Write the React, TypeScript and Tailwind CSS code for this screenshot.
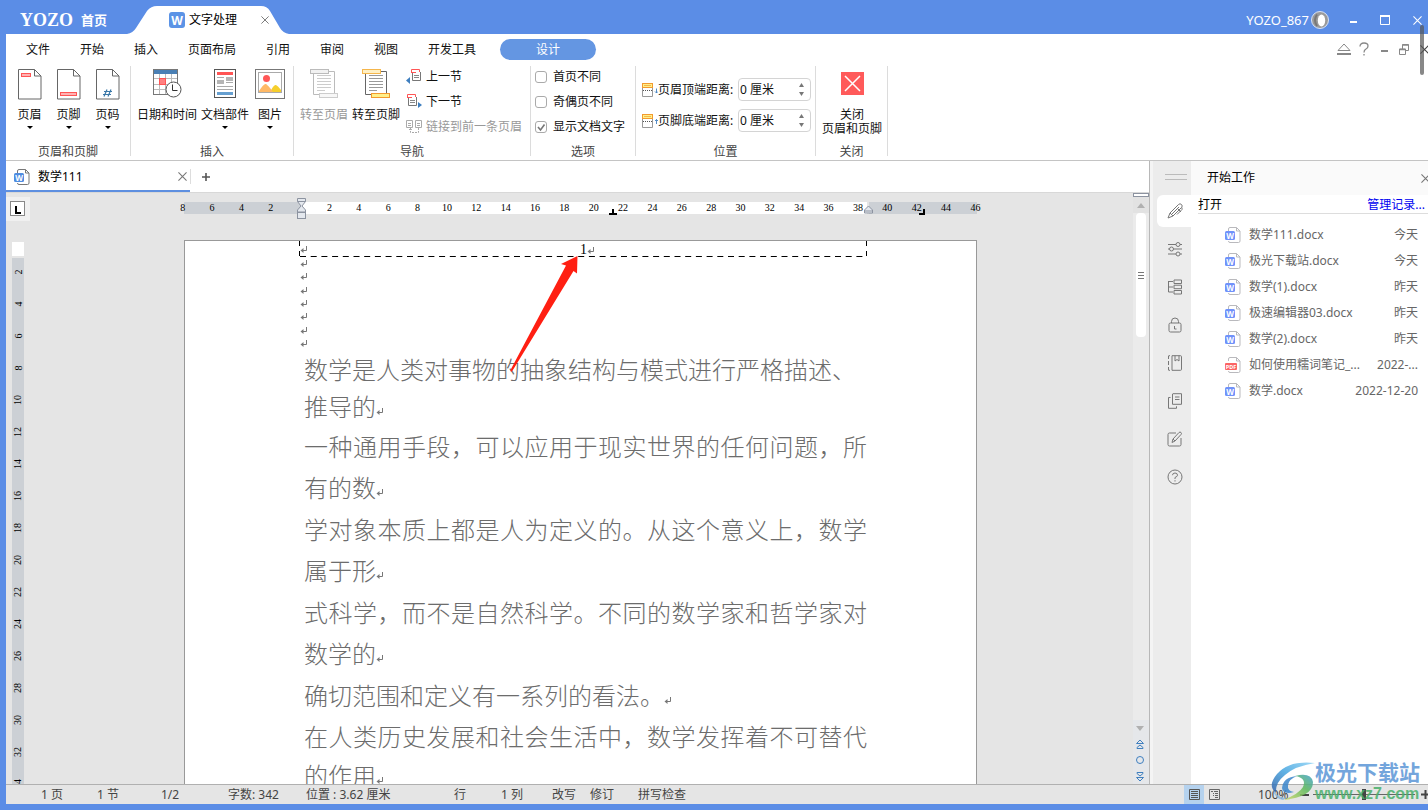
import React, { useState } from 'react';

const menuItems = ['文件', '开始', '插入', '页面布局', '引用', '审阅', '视图', '开发工具'];

const recentFiles = [
  { name: '数学111.docx', date: '今天', type: 'doc' },
  { name: '极光下载站.docx', date: '今天', type: 'doc' },
  { name: '数学(1).docx', date: '昨天', type: 'doc' },
  { name: '极速编辑器03.docx', date: '昨天', type: 'doc' },
  { name: '数学(2).docx', date: '昨天', type: 'doc' },
  { name: '如何使用糯词笔记_...', date: '2022-...', type: 'pdf' },
  { name: '数学.docx', date: '2022-12-20', type: 'doc' }
];

const paragraphs = [
  { full: '数学是人类对事物的抽象结构与模式进行严格描述、', rest: '推导的', leading: 'leading-[37px]', justify: false },
  { full: '一种通用手段，可以应用于现实世界的任何问题，所', rest: '有的数', leading: 'leading-[41px]', justify: true },
  { full: '学对象本质上都是人为定义的。从这个意义上，数学', rest: '属于形', leading: 'leading-[41px]', justify: true },
  { full: '式科学，而不是自然科学。不同的数学家和哲学家对', rest: '数学的', leading: 'leading-[41px]', justify: true },
  { full: '', rest: '确切范围和定义有一系列的看法。', leading: 'leading-[41px]', justify: false },
  { full: '在人类历史发展和社会生活中，数学发挥着不可替代', rest: '的作用', leading: 'leading-[39px]', justify: true }
];

const horizontalMarks = [
  '8', '6', '4', '2', '', '2', '4', '6', '8', '10', '12', '14', '16', '18', '20', '22', '24', '26',
  '28', '30', '32', '34', '36', '38', '40', '42', '44', '46'
];
const verticalMarks = ['2', '4', '6', '8', '10', '12', '14', '16', '18', '20', '22', '24', '26', '28', '30', '32', '34'];

const CloseIcon = ({ size = 10, className = '' }: { size?: number; className?: string }) => (
  <svg width={size} height={size} viewBox="0 0 10 10" fill="none" stroke="currentColor" strokeWidth="1.2" className={className}>
    <path d="M.5.5l9 9M9.5.5l-9 9" />
  </svg>
);

const DownArrow = () => (
  <svg width="6" height="3" viewBox="0 0 6 3">
    <path d="M0 0h6L3 3z" fill="#000" />
  </svg>
);

const ReturnMark = () => (
  <svg width="8" height="7" viewBox="0 0 8 7" fill="none" stroke="#777" className="inline-block shrink-0">
    <path d="M6.500 0v4.500H1.500" />
    <path d="M3.500 2v5L.5 4.500z" fill="#777" stroke="none" />
  </svg>
);

const FileIcon = ({ type, dark }: { type: string; dark?: boolean }) => (
  <svg width="16" height="16" viewBox="0 0 16 16" className="shrink-0">
    <path d="M3.500 4V2q0-1.500 1.500-1.500h6.500l3.500 3.500v10q0 1.500-1.500 1.500H5q-1.500 0-1.500-1.500" fill="#fff" stroke={dark ? '#777' : '#b9b9bd'} />
    <path d="M11.500.5V4H15" fill="none" stroke={dark ? '#777' : '#b9b9bd'} />
    {type === 'pdf' ? (
      <>
        <rect x="0" y="6" width="12" height="7" rx="1" fill="#fb6464" />
        <text x="6" y="11.500" fontSize="5.500" fontWeight="700" textAnchor="middle" fill="#fff">PDF</text>
      </>
    ) : (
      <>
        <rect x="0" y="4" width="10" height="9" rx="1.500" fill={dark ? '#4f8ce0' : '#7092fa'} />
        <text x="5" y="11.500" fontSize="8" fontWeight="700" textAnchor="middle" fill="#fff">W</text>
      </>
    )}
  </svg>
);

const PageIcon = ({ kind }: { kind: 'header' | 'footer' | 'number' }) => (
  <svg width="24" height="31" viewBox="0 0 24 31" fill="none">
    <path d="M.5.5h16l6.500 6.500v23H.5z" fill="#fff" stroke="#666" />
    <path d="M16.500.5V7H23" stroke="#666" />
    {kind === 'header' && <rect x="3.500" y="4.500" width="9" height="3" fill="#ffb3b3" stroke="#f55" />}
    {kind === 'footer' && <rect x="3.500" y="23.500" width="16" height="3" fill="#ffb3b3" stroke="#f55" />}
    {kind === 'number' && <path d="M11 20.500l-3 7M15 20.500l-3 7M8 22.500h8M7 25.500h8" stroke="#3b78a8" strokeWidth="1.200" />}
  </svg>
);

const CalendarIcon = () => (
  <svg width="29" height="29" viewBox="0 0 29 29" fill="none">
    <rect x=".5" y=".5" width="24" height="25" fill="#fff" stroke="#777" />
    <rect x="1" y="1" width="23" height="4" fill="#4a80b5" />
    <path d="M6.500 5v20M12.500 5v20M18.500 5v20M1 9.500h23M1 15.500h23M1 20.500h23" stroke="#bbb" />
    <rect x="6.500" y="9.500" width="6" height="6" fill="#ff8080" stroke="#f55" />
    <circle cx="20.500" cy="20.500" r="7.500" fill="#fff" stroke="#555" />
    <path d="M19.500 15.500v6h5" stroke="#333" />
  </svg>
);

const PartsIcon = () => (
  <svg width="22" height="30" viewBox="0 0 22 30" fill="none">
    <rect x=".5" y=".5" width="21" height="28" fill="#fff" stroke="#555" />
    <rect x="3" y="3" width="16" height="3" fill="#f55" />
    <path d="M3 8.500h7M12 13.500h7M3 17.500h16M3 20.500h16" stroke="#aaa" />
    <rect x="3" y="11" width="7" height="4" fill="#b5b5b5" />
    <rect x="12" y="8" width="7" height="4" fill="#b5b5b5" />
    <rect x="3" y="23" width="16" height="3" fill="#669fd0" />
  </svg>
);

const PictureIcon = () => (
  <svg width="30" height="30" viewBox="0 0 30 30" fill="none">
    <rect x=".5" y=".5" width="29" height="29" fill="#fff" stroke="#777" />
    <rect x="3.500" y="3.500" width="23" height="20" fill="#fff" stroke="#aaa" />
    <circle cx="11.500" cy="9.500" r="3.500" fill="#ff5757" />
    <path d="M15 23q4-8 6-7t5 5v2z" fill="#f6cf2c" />
    <path d="M4 22q5-8 7-7t7 8H4z" fill="#ffb966" />
  </svg>
);

const GotoIcon = ({ footer }: { footer?: boolean }) => (
  <svg width="28" height="30" viewBox="0 0 28 30" fill="none" stroke={footer ? '#666' : '#bbb'}>
    <path d="M3.500 2.500h21v23h-21z" fill="#fff" />
    <path d="M7 6.500h14M7 9.500h14M7 12.500h14M7 15.500h14M7 18.500h14M7 21.500h8" stroke={footer ? '#999' : '#ccc'} />
    <rect x=".5" y=".5" width="18" height="4" fill={footer ? '#fff0c4' : '#f2f2f2'} stroke={footer ? '#f5b64c' : '#bbb'} />
    <rect x="9.500" y="24.500" width="18" height="4" fill={footer ? '#fff08a' : '#f7f7f7'} stroke={footer ? '#f29a2e' : '#ccc'} />
  </svg>
);

const SectionIcon = ({ next }: { next?: boolean }) => (
  <svg width="16" height="15" viewBox="0 0 16 15" fill="none">
    <g transform={next ? 'translate(-4 0)' : undefined}>
      <path d="M6.500 3v8.500h8V3" stroke="#777" fill="#fff" />
      <path d="M8 6.500h5M8 8.500h5" stroke="#888" />
      <path d="M5.500 3V.5h8V3" stroke="#f55" />
      <path d="M5 3.500h5" stroke="#f55" />
    </g>
    {next ? <path d="M12 8v6l4-3z" fill="#3f7fbf" /> : <path d="M4 8v7L0 11.500z" fill="#3f7fbf" />}
  </svg>
);

const LinkIcon = () => (
  <svg width="16" height="15" viewBox="0 0 16 15" fill="none" stroke="#aaa">
    <path d="M.5 1.500h6v7h-6zM9.500 1.500h6v7h-6zM2 4.500h3M2 6.500h3M11 4.500h3M11 6.500h3" />
    <path d="M4.500 9v4.500h8V9M3 11l1.500-1.500L6 11" strokeDasharray="2 1" />
  </svg>
);

const DistanceIcon = ({ up }: { up?: boolean }) => (
  <svg width="16" height="14" viewBox="0 0 16 14" fill="none">
    <path d="M.5 5v8.500h10V5" stroke="#999" />
    <path d="M1 7.500h9" stroke="#555" strokeDasharray="1 1" />
    <rect x=".5" y=".5" width="10" height="4" fill="#fff08a" stroke="#f29a2e" />
    <path d="M2 2.500h7" stroke="#f5b64c" />
    <path d={up ? 'M14.500 10V5.500M13 7l1.500-1.500L16 7' : 'M14.500 5.500V10M13 8.500l1.500 1.500L16 8.500'} stroke="#3f7fbf" strokeWidth=".9" />
  </svg>
);

const sideIcons: { label: string; art: React.ReactNode }[] = [
  { label: '开始工作', art: <path d="M1 15l2-5 8.500-8.500q1.500-1.500 3 0t0 3L6 13zM3 10l3 3M4.500 11.500l7.500-7.500M11 6l3 3M15 4.500v2l-5 5" /> },
  { label: '属性', art: <path d="M1 3.500h8M13 3.500h2M1 8h1.500M6.500 8H15M1 13h8M13 13h2M11 1.500a2 2 0 100 4 2 2 0 000-4zM4.500 6a2 2 0 100 4 2 2 0 000-4zM11 11a2 2 0 100 4 2 2 0 000-4z" /> },
  { label: '结构', art: <path d="M1.500 2v11H6M1.500 2.500H6M1.500 8H6M7 1h7.500v3.500H7zM7 6.200h7.500v3.500H7zM7 11.500h7.500V15H7z" /> },
  { label: '保护', art: <path d="M3.500 6h9q1.500 0 1.500 1.500v6q0 1.500-1.500 1.500h-9Q2 15 2 13.500v-6Q2 6 3.500 6zM4.500 6V4.500q0-3.500 3.500-3.500t3.500 3.500V6M7.500 9v3h2" /> },
  { label: '书签', art: <path d="M5 .7h8.500q1 0 1 1v12.600q0 1-1 1H5zM8 .7V6l2-1.500L12 6V.7M1.500 1v3M1.500 6v4M1.500 12v3M1.500.7H3M1.500 15.300H3" /> },
  { label: '剪贴板', art: <path d="M6 .7h8.500v10.600H5.500V1zM8 4h4.500M8 6.500h4.500M3.500 4.500H1.500v10.800h8v-2" /> },
  { label: '批注', art: <path d="M9 2H2.500Q1 2 1 3.500v10Q1 15 2.500 15h10q1.500 0 1.500-1.500V7M5 11.500l1-3.500 6-6.500q1-1 2 0t0 2L8 10zM6 8l2 2" /> },
  { label: '帮助', art: <path d="M8 1a7 7 0 100 14A7 7 0 008 1zM5.500 6.200Q5.500 4 8 4t2.500 2.200Q10.500 7.500 8 8.500V10M8 11.200v1.300" /> }
];

const Group = ({ label, className, children }: { label: string; className: string; children: React.ReactNode }) => (
  <section className="flex shrink-0">
    <div className="flex flex-col">
      <div className={`flex flex-1 ${className}`}>{children}</div>
      <p className="h-[18px] text-center leading-5 text-[#444]">{label}</p>
    </div>
    <div className="mb-1 mt-0.5 w-px bg-[#dcdcdc]" />
  </section>
);

const BigButton = ({ icon, label, width, arrow, disabled }: { icon: React.ReactNode; label: string; width: string; arrow?: boolean; disabled?: boolean }) => (
  <button disabled={disabled} className={`flex flex-col items-center self-start pt-[5px] disabled:text-[#999] ${width}`}>
    <span className="flex h-[38px] items-start">{icon}</span>
    <span className="mb-[3px] whitespace-nowrap leading-4">{label}</span>
    {arrow && <DownArrow />}
  </button>
);

const DistanceField = ({ id, label, up }: { id: string; label: string; up?: boolean }) => {
  const [value, setValue] = useState(0);

  return (
    <div className="flex h-[23px] items-center">
      <DistanceIcon up={up} />
      <label htmlFor={id} className="w-20 whitespace-nowrap">{label}</label>
      <div className="flex h-full w-[73px] items-center rounded border border-[#d4d4d4]">
        <input
          id={id}
          className="w-[54px] min-w-0 pl-px outline-none"
          value={`${value} 厘米`}
          onChange={(e) => setValue(parseInt(e.target.value) || 0)}
        />
        <div className="flex flex-1 flex-col items-center gap-[5px]">
          <button aria-label="增加" className="flex" onClick={() => setValue(value + 1)}>
            <svg width="5" height="4" viewBox="0 0 5 4"><path d="M0 4h5L2.500 0z" fill="#777" /></svg>
          </button>
          <button aria-label="减少" className="flex" onClick={() => setValue(Math.max(0, value - 1))}>
            <svg width="5" height="4" viewBox="0 0 5 4"><path d="M0 0h5L2.500 4z" fill="#777" /></svg>
          </button>
        </div>
      </div>
    </div>
  );
};

const TitleBar = () => (
  <header className="flex h-[34px] shrink-0 items-center pl-5 text-white">
    <span className="w-[61px] pt-1.5 text-[18px] font-bold leading-5 [font-family:'Liberation_Serif',serif]">YOZO</span>
    <button className="pt-1.5 text-[13px] font-bold">首页</button>
    <div className="relative ml-5 h-full w-[164px]">
      <svg className="absolute inset-0" width="164" height="34" viewBox="0 0 164 34">
        <path d="M0 34q6-1 9-6l11-17q4-5 10-5h104q6 0 9 5l10 17q3 5 9 6z" fill="#fff" />
      </svg>
      <div className="relative flex h-full items-center pl-[42px] pt-1.5 text-black">
        <svg width="16" height="16" viewBox="0 0 16 16" className="mr-1">
          <rect width="16" height="16" rx="3" fill="#5b93e6" />
          <text x="8" y="12.500" fontSize="12" fontWeight="700" textAnchor="middle" fill="#fff">W</text>
        </svg>
        <span>文字处理</span>
        <button aria-label="关闭" className="ml-6 text-[#777]"><CloseIcon size={8} /></button>
      </div>
    </div>
    <div className="ml-auto flex items-center pt-1.5">
      <span className="mr-0.5 text-[13px]">YOZO_867</span>
      <svg width="18" height="18" viewBox="0 0 18 18" className="mr-3">
        <circle cx="9" cy="9" r="8.500" fill="#9a9a9a" stroke="#d6e2f7" />
        <path d="M6 3.500Q2 9 6 15" stroke="#777" strokeWidth="2" fill="none" />
        <ellipse cx="10.500" cy="9.500" rx="3.700" ry="6" fill="#fff" />
      </svg>
      <div className="-mr-px flex gap-2">
        <button aria-label="最小化" className="flex h-6 w-6 items-center justify-center pt-1"><svg width="7" height="2"><rect width="7" height="2" fill="#fff" /></svg></button>
        <button aria-label="最大化" className="flex h-6 w-6 items-center justify-center">
          <svg width="10" height="10" viewBox="0 0 10 10"><path d="M.5 1v8.500h9V1" stroke="#fff" fill="none" /><rect width="10" height="2" fill="#fff" /></svg>
        </button>
        <button aria-label="关闭窗口" className="flex h-6 w-6 items-center justify-center"><CloseIcon size={9} /></button>
      </div>
    </div>
  </header>
);

const MenuBar = () => (
  <nav className="flex h-[30px] items-center gap-[30px] pl-5">
    {menuItems.map((item) => (
      <button key={item} className="whitespace-nowrap pt-0.5">{item}</button>
    ))}
    <button className="-ml-1.5 h-[21px] w-24 rounded-full bg-[#6496e2] pt-px leading-5 text-white">设计</button>
    <div className="-mr-1.5 ml-auto flex text-[#888]">
      <button aria-label="收起功能区" className="flex h-5 w-5 items-center justify-center">
        <svg width="14" height="12" viewBox="0 0 14 12" fill="none" stroke="currentColor"><path d="M1 7.500L7 1l6 6.500z" /><path d="M0 11h14" strokeWidth="2" /></svg>
      </button>
      <button aria-label="帮助" className="flex h-5 w-5 items-center justify-center">
        <svg width="10" height="14" viewBox="0 0 10 14" fill="none" stroke="currentColor" strokeWidth="1.300"><path d="M1 4.500Q1 1 5 1t4 3q0 2-2 3T5 10.500M5 12v1.500" /></svg>
      </button>
      <button aria-label="最小化文档" className="flex h-5 w-5 items-center justify-center pt-1"><svg width="7" height="2"><rect width="7" height="2" fill="#888" /></svg></button>
      <button aria-label="还原文档" className="flex h-5 w-5 items-center justify-center">
        <svg width="10" height="11" viewBox="0 0 10 11" fill="none" stroke="currentColor"><path d="M.5 5h6v5.500h-6zM3.500 5V.5h6v6h-3" /><path d="M.5 5.500h6M3.500 1h6" strokeWidth="1.500" /></svg>
      </button>
      <button aria-label="关闭文档" className="flex h-5 w-5 items-center justify-center text-[#444]"><CloseIcon size={9} /></button>
    </div>
  </nav>
);

const Ribbon = () => {
  const [options, setOptions] = useState([
    { label: '首页不同', checked: false },
    { label: '奇偶页不同', checked: false },
    { label: '显示文档文字', checked: true }
  ]);

  const toggle = (index: number) => {
    setOptions(options.map((o, i) => (i === index ? { ...o, checked: !o.checked } : o)));
  };

  return (
    <div className="flex h-[97px] overflow-hidden border-b border-[#c4c4c4]">
      <Group label="页眉和页脚" className="pl-1 pr-[3px]">
        <BigButton icon={<PageIcon kind="header" />} label="页眉" width="w-[39px]" arrow />
        <BigButton icon={<PageIcon kind="footer" />} label="页脚" width="w-[39px]" arrow />
        <BigButton icon={<PageIcon kind="number" />} label="页码" width="w-[39px]" arrow />
      </Group>

      <Group label="插入" className="gap-1 px-1.5">
        <BigButton icon={<CalendarIcon />} label="日期和时间" width="w-[60px]" />
        <BigButton icon={<PartsIcon />} label="文档部件" width="w-12" arrow />
        <BigButton icon={<PictureIcon />} label="图片" width="w-[34px]" arrow />
      </Group>

      <Group label="导航" className="gap-1 pl-1.5 pr-2">
        <BigButton icon={<GotoIcon />} label="转至页眉" width="w-12" disabled />
        <BigButton icon={<GotoIcon footer />} label="转至页脚" width="w-12" />
        <div className="ml-0.5">
          <button className="flex h-[25px] items-center gap-1"><SectionIcon />上一节</button>
          <button className="flex h-[25px] items-center gap-1"><SectionIcon next />下一节</button>
          <button disabled className="flex h-[25px] items-center gap-1 whitespace-nowrap text-[#999]"><LinkIcon />链接到前一条页眉</button>
        </div>
      </Group>

      <Group label="选项" className="flex-col pl-1 pr-2.5">
        {options.map((option, index) => (
          <label key={option.label} className="flex h-[25px] items-center gap-1.5 whitespace-nowrap">
            <span className="relative flex">
              <input
                type="checkbox"
                checked={option.checked}
                onChange={() => toggle(index)}
                className="h-3 w-3 appearance-none rounded-[3px] border border-[#aaa] bg-white"
              />
              {option.checked && (
                <svg className="pointer-events-none absolute inset-0" width="12" height="12" viewBox="0 0 12 12" fill="none" stroke="#777" strokeWidth="1.600">
                  <path d="M3 6l2.500 3L9.500 3.500" />
                </svg>
              )}
            </span>
            {option.label}
          </label>
        ))}
      </Group>

      <Group label="位置" className="flex-col gap-2 pl-1.5 pr-1 pt-3.5">
        <DistanceField id="header-distance" label="页眉顶端距离:" />
        <DistanceField id="footer-distance" label="页脚底端距离:" up />
      </Group>

      <Group label="关闭" className="pl-1.5 pr-[5px]">
        <button className="flex flex-col items-center self-start pt-2">
          <svg width="23" height="23" viewBox="0 0 23 23" className="mb-[13px]">
            <rect width="23" height="23" fill="#ff5a5a" />
            <path d="M4 4l15 15M19 4L4 19" stroke="#fff" strokeWidth="1.500" />
          </svg>
          <span className="leading-3.5">关闭</span>
          <span className="leading-3.5">页眉和页脚</span>
        </button>
      </Group>
    </div>
  );
};

const HorizontalRuler = () => (
  <div className="relative h-[18px] w-[793px] max-w-none shrink-0 py-[3px]">
    <div className="flex h-3">
      <div className="w-[117px] bg-[#ccd0d5]" />
      <div className="mr-0.5 flex-1 bg-white" />
      <div className="w-[108px] bg-[#ccd0d5]" />
    </div>
    {/* One cell per two units, so the outer labels sit on the page edges */}
    <div className="absolute -left-4 -right-[13px] top-[3px] flex h-3">
      {horizontalMarks.map((mark, i) => (
        <span key={i} className="flex-1 text-center text-[10px] leading-3 text-black [font-family:'Liberation_Serif',serif]">{mark}</span>
      ))}
    </div>
    <svg className="absolute -top-px left-[113px]" width="9" height="22" viewBox="0 0 9 22" fill="#e4e8ee" stroke="#8c93a0">
      <path d="M.5.5h8v3L5 8l3.500 4v2h-8v-2L4 8 .5 3.500z" />
      <path d="M.5 3.500h8" />
      <rect x=".5" y="14.500" width="8" height="6" />
    </svg>
    <svg className="absolute left-[425px] top-2.5" width="8" height="6"><path d="M0 4h8v2H0zM3 0h2v5H3z" /></svg>
    <svg className="absolute left-[680px] top-1.5" width="9" height="9" viewBox="0 0 9 9" fill="#e4e8ee" stroke="#8c93a0">
      <path d="M4.500 1l4 4v3h-8V5zM.5 6h8" />
    </svg>
    <svg className="absolute left-[735px] top-2.5" width="6" height="6"><path d="M0 4h6v2H0zM4 0h2v6H4z" /></svg>
  </div>
);

const DocumentPage = () => (
  <article className="relative min-h-[1100px] w-[793px] shrink-0 border border-[#999] bg-white pl-[119px] pr-[109px]">
    <div className="relative -ml-1 flex h-4 items-center [font-family:'Liberation_Serif',serif]">
      <svg className="absolute inset-0 h-[17px] w-full overflow-visible" stroke="#000" strokeDasharray="6 4.700">
        <line x1="0" y1="15.500" x2="567" y2="15.500" />
        <line x1="-.5" y1="0" x2="-.5" y2="16" strokeDasharray="5 5" />
        <line x1="566.500" y1="0" x2="566.500" y2="16" strokeDasharray="5 5" />
      </svg>
      <ReturnMark />
      <span className="mx-auto flex items-center pt-0.5 text-[14px] leading-4 text-black">1<ReturnMark /></span>
    </div>
    <div className="-ml-1 flex h-[93px] flex-col">
      {Array.from({ length: 7 }).map((_, i) => (
        <span key={i} className="flex flex-1 items-center"><ReturnMark /></span>
      ))}
    </div>
    <div className="flex flex-col gap-px pt-px text-[24px] font-light text-[#6c6c6c]">
      {paragraphs.map((p) => (
        <p key={p.rest} className={p.leading}>
          {p.full && (
            <span className={`block whitespace-nowrap ${p.justify ? '[text-align-last:justify]' : ''}`}>{p.full}</span>
          )}
          <span className="flex items-center">
            {p.rest}
            <span className="flex pt-2.5"><ReturnMark /></span>
          </span>
        </p>
      ))}
    </div>
    <svg className="absolute left-[325px] top-[15px]" width="70" height="120" viewBox="0 0 70 120">
      <path d="M67.500 0L51 8l5 1.500L.5 114q-.5 2 1.500 1.500L63.500 15l3.500 2.500z" fill="#ff1f12" />
    </svg>
  </article>
);

const ScrollBar = () => (
  <div className="flex w-4 shrink-0 flex-col items-center bg-[#ebebeb]">
    <div className="h-1 w-full border border-[#8c93a0] bg-white" />
    <button aria-label="向上滚动" className="flex h-4 w-full items-center justify-center bg-[#e2e2e2]">
      <svg width="8" height="5" viewBox="0 0 8 5"><path d="M0 5h8L4 0z" fill="#b0b0b0" /></svg>
    </button>
    <div className="flex h-[124px] w-2.5 items-center justify-center rounded-sm bg-white">
      <svg width="6" height="7" viewBox="0 0 6 7" stroke="#777"><path d="M0 .5h6M0 3.500h6M0 6.500h6" /></svg>
    </div>
    <div className="mt-auto flex w-full flex-col items-center bg-[#e5e7ea] pr-0.5 text-[#3f7fbf]">
      <button aria-label="向下滚动" className="flex h-4 items-center">
        <svg width="8" height="5" viewBox="0 0 8 5"><path d="M0 0h8L4 5z" fill="#b0b0b0" /></svg>
      </button>
      <button aria-label="上一页" className="flex h-4 items-center">
        <svg width="8" height="11" viewBox="0 0 8 11" fill="none" stroke="currentColor"><path d="M.5 4.500L4 1l3.500 3.500zM1 9.500v-1L4 6l3 2.500v1z" /></svg>
      </button>
      <button aria-label="选择浏览对象" className="flex h-4 items-center">
        <svg width="8" height="8" viewBox="0 0 8 8" fill="none" stroke="currentColor"><circle cx="4" cy="4" r="3.500" /></svg>
      </button>
      <button aria-label="下一页" className="flex h-4 items-center">
        <svg width="8" height="11" viewBox="0 0 8 11" fill="none" stroke="currentColor"><path d="M1 1.500v1L4 5l3-2.500v-1zM.5 6.500L4 10l3.500-3.500z" /></svg>
      </button>
    </div>
  </div>
);

const Editor = () => (
  <main className="flex min-w-0 flex-1 flex-col border-r border-[#b8b8b8]">
    {/* Document tabs */}
    <div className="flex h-8 shrink-0 border-b border-[#d8d8d8] bg-white">
      <div className="flex w-[184px] items-center border-b-2 border-[#5e8fe0] pl-2 pt-0.5 text-black">
        <FileIcon type="doc" dark />
        <span className="ml-2">数学111</span>
        <button aria-label="关闭标签" className="ml-auto pr-[3px] text-[#777]"><CloseIcon size={9} /></button>
      </div>
      <div className="my-2 w-px bg-[#ddd]" />
      <button aria-label="新建标签" className="px-[11px] text-[#555]">
        <svg width="8" height="8" viewBox="0 0 8 8" stroke="currentColor" strokeWidth="1.600"><path d="M4 0v8M0 4h8" /></svg>
      </button>
    </div>

    <div className="flex min-h-0 flex-1 bg-[#e5e5e5]">
      <div className="flex w-6 shrink-0 flex-col overflow-hidden">
        <div className="mt-1 h-6 shrink-0 bg-[#f0f0f0] p-1">
          <svg width="15" height="15" viewBox="0 0 15 15"><rect x=".5" y=".5" width="14" height="14" fill="#fff" stroke="#888" /><path d="M5 5h2v6h4v2H5z" /></svg>
        </div>
        <div className="ml-1.5 mt-[21px] h-3.5 w-3 shrink-0 bg-white" />
        <div className="ml-1.5 mt-0.5 flex w-3 flex-1 flex-col overflow-hidden bg-[#ccd0d5]">
          {verticalMarks.map((mark) => (
            <span key={mark} className="flex h-8 w-3 shrink-0 items-center justify-center pb-1">
              <span className="-rotate-90 text-[10px] leading-3 text-black [font-family:'Liberation_Serif',serif]">{mark}</span>
            </span>
          ))}
        </div>
      </div>
      <div className="flex min-w-0 flex-1 flex-col items-center overflow-hidden pr-0.5 pt-1.5">
        <HorizontalRuler />
        <div className="h-[23px] shrink-0" />
        <DocumentPage />
      </div>
      <ScrollBar />
    </div>
  </main>
);

const SidePanel = () => {
  const [active, setActive] = useState(0);

  return (
    <aside className="flex shrink-0 bg-[#f4f4f4] pl-[3px]">
      <div className="flex w-[38px] flex-col items-end bg-[#ececec] text-[#777]">
        <div className="mb-[15px] mr-1 mt-[13px] h-1.5 w-[22px] border-y border-[#bbb]" />
        <div className="flex flex-col gap-1.5">
          {sideIcons.map((icon, index) => (
            <button
              key={icon.label}
              aria-label={icon.label}
              onClick={() => setActive(index)}
              className={`flex h-8 w-[34px] items-center justify-center rounded-l-md pl-0.5 ${active === index ? 'bg-white' : ''}`}
            >
              <svg width="16" height="16" viewBox="0 0 16 16" fill="none" stroke="currentColor">{icon.art}</svg>
            </button>
          ))}
        </div>
      </div>
      <div className="flex w-[237px] flex-col overflow-hidden bg-white">
        <div className="flex h-[34px] items-center justify-between bg-[#fafafa] pl-4 text-black">
          <h2>开始工作</h2>
          <button aria-label="关闭面板" className="-mr-0.5 text-[#777]"><CloseIcon size={9} /></button>
        </div>
        <div className="ml-[7px] flex h-[19px] items-center justify-between border-b border-[#ddd] pr-[3px] pt-0.5 text-black">
          <h3>打开</h3>
          <a href="#records" className="text-[#0000f0]">管理记录...</a>
        </div>
        <ul className="pt-2 text-[#666]">
          {recentFiles.map((file) => (
            <li key={file.name}>
              <button className="flex h-[26px] w-full items-center pl-[34px] pr-2.5">
                <FileIcon type={file.type} />
                <span className="ml-2 flex-1 whitespace-nowrap text-left">{file.name}</span>
                <span>{file.date}</span>
              </button>
            </li>
          ))}
        </ul>
      </div>
    </aside>
  );
};

const StatusBar = () => {
  const [zoom, setZoom] = useState(100);

  return (
    <footer className="flex h-5 shrink-0 items-center overflow-hidden whitespace-nowrap border-t border-[#b0b0b0] bg-[#e5e5e5] pl-[35px] text-[#444]">
      <span className="w-14">1 页</span>
      <span className="w-16">1 节</span>
      <span className="w-[67px]">1/2</span>
      <span className="w-[78px]">字数: 342</span>
      <span className="w-[148px]">位置 : 3.62 厘米</span>
      <span className="w-[47px]">行</span>
      <span className="w-[51px]">1 列</span>
      <span className="w-[38px]">改写</span>
      <span className="w-12">修订</span>
      <span>拼写检查</span>
      <div className="-mr-0.5 ml-auto flex h-full items-center">
        <button aria-label="页面视图" className="flex h-full w-5 items-center justify-center bg-[#b5d2ee]">
          <svg width="11" height="11" viewBox="0 0 11 11" fill="none" stroke="#555"><path d="M.5.5h10v10H.5zM2 2.500h7M2 4.500h7M2 6.500h7M2 8.500h7" /></svg>
        </button>
        <button aria-label="大纲视图" className="flex h-full w-5 items-center justify-center">
          <svg width="11" height="11" viewBox="0 0 11 11" fill="none" stroke="#666"><path d="M.5.5h10v10H.5zM2 2.500h2M5 2.500h4M4 4.500h1M6 4.500h3M4 6.500h1M6 6.500h3M6 8.500h3" /></svg>
        </button>
        <span className="ml-[34px] w-[42px]">{zoom}%</span>
        <button aria-label="缩小" onClick={() => setZoom(zoom - 10)}>
          <svg width="9" height="8" viewBox="0 0 9 8" stroke="#444" strokeWidth="2"><path d="M0 4h9" /></svg>
        </button>
        <input
          type="range"
          aria-label="显示比例"
          min={0}
          max={200}
          value={zoom}
          onChange={(e) => setZoom(Number(e.target.value))}
          className="mx-1 h-3 w-[102px] appearance-none bg-[linear-gradient(#666,#666)] bg-[length:100%_1px] bg-center bg-no-repeat [&::-webkit-slider-thumb]:h-[11px] [&::-webkit-slider-thumb]:w-1 [&::-webkit-slider-thumb]:appearance-none [&::-webkit-slider-thumb]:bg-[#444]"
        />
        <button aria-label="放大" className="ml-0.5" onClick={() => setZoom(zoom + 10)}>
          <svg width="9" height="9" viewBox="0 0 9 9" stroke="#444" strokeWidth="2"><path d="M0 4.500h9M4.500 0v9" /></svg>
        </button>
      </div>
    </footer>
  );
};

const Watermark = () => (
  <div className="pointer-events-none absolute bottom-1.5 right-2 flex items-center opacity-85">
    <svg width="44" height="40" viewBox="0 0 44 40">
      <defs>
        <linearGradient id="swirlBlue" x1="0" y1="1" x2="1" y2="0">
          <stop offset="0" stopColor="#2f5fa8" />
          <stop offset=".5" stopColor="#45a5e0" />
          <stop offset="1" stopColor="#8fd3f5" />
        </linearGradient>
        <linearGradient id="swirlGreen" x1="0" y1="1" x2="1" y2="0">
          <stop offset="0" stopColor="#d6dc6a" />
          <stop offset=".6" stopColor="#5cb85c" />
          <stop offset="1" stopColor="#3f9fd0" />
        </linearGradient>
      </defs>
      <path d="M44 1Q18-2 6 12-4 24 5 31q-1-10 9-18Q24 4 44 1z" fill="url(#swirlBlue)" />
      <path d="M26 14q-14 1-15 12 1 7 12 4-7-1-6-7 1-6 9-9z" fill="#3b86cc" />
      <path d="M24 14q16-4 18 6 0 15-30 18 16-6 20-13 4-9-8-11z" fill="url(#swirlGreen)" />
      <path d="M2 28q5 8 14 8l-4 2Q4 37 2 28z" fill="#8db8da" />
    </svg>
    <div className="flex flex-col">
      <span className="text-[21px] font-bold leading-6 text-[#5b96d6]">极光下载站</span>
      <span className="text-[16px] font-bold leading-5 text-[#49b06c] [font-family:'Liberation_Sans',sans-serif]">www.xz7.com</span>
    </div>
  </div>
);

export default function App() {
  return (
    <div lang="zh-CN" className="relative flex h-screen flex-col overflow-hidden bg-[#5b8de6] pb-1.5 text-[12px] leading-4 text-[#111] [font-family:'Noto_Sans','Noto_Sans_CJK_SC',sans-serif]">
      <TitleBar />
      <div className="ml-1.5 flex min-h-0 flex-1 flex-col bg-white">
        <MenuBar />
        <Ribbon />
        <div className="flex min-h-0 flex-1">
          <Editor />
          <SidePanel />
        </div>
        <StatusBar />
      </div>
      <div className="absolute right-1 top-[25px] h-[50px] w-1 rounded-full bg-[#555]/70" />
      <Watermark />
    </div>
  );
}
